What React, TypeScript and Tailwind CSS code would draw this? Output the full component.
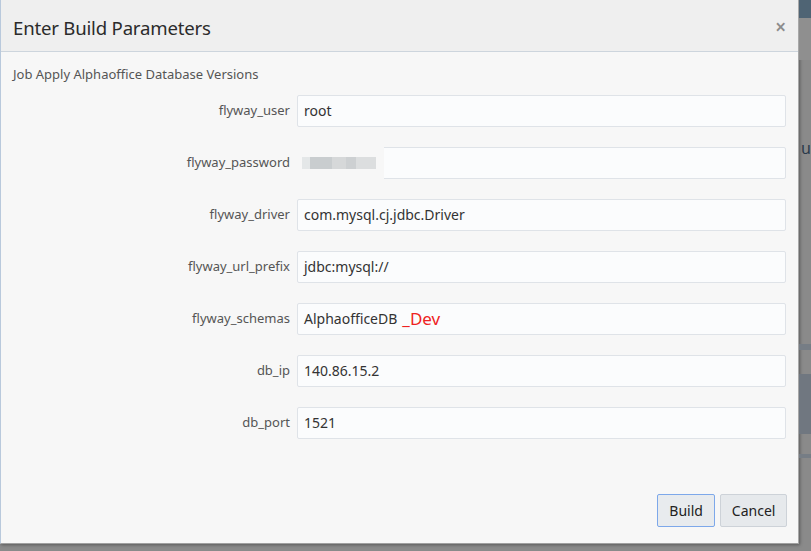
import React from "react";

const fields = [
  { label: "flyway_user", value: "root" },
  { label: "flyway_password", value: "", masked: true },
  { label: "flyway_driver", value: "com.mysql.cj.jdbc.Driver" },
  { label: "flyway_url_prefix", value: "jdbc:mysql://" },
  { label: "flyway_schemas", value: "AlphaofficeDB", suffix: "_Dev" },
  { label: "db_ip", value: "140.86.15.2" },
  { label: "db_port", value: "1521" },
];

export default function App() {
  return (
    <div
      className="w-[811px] h-[551px] flex bg-[#8a8a8a] overflow-hidden"
      style={{ fontFamily: "'Noto Sans', 'Open Sans', sans-serif" }}
    >
      <div className="w-[800px] h-[544px] flex flex-col bg-[#f7f7f7] border-l border-[#b9c9dc] border-r border-b border-r-[#a8a8a8] border-b-[#a0a0a0] shadow-[1px_1px_3px_rgba(0,0,0,0.35)]">
        {/* Header */}
        <div className="h-[52px] shrink-0 flex items-center justify-between pl-[12px] pr-[12px] pt-[4px] bg-[#efefef] border-b border-[#cdd5dd]">
          <h1 className="text-[18.6px] text-[#2b2b2b] tracking-[-0.2px]">Enter Build Parameters</h1>
          <span className="text-[19px] leading-none text-[#8c8c8c] font-semibold">×</span>
        </div>

        {/* Body */}
        <div className="flex-1 flex flex-col pl-[12px] pr-[11px]">
          <p className="mt-[13px] text-[13px] text-[#555]">Job Apply Alphaoffice Database Versions</p>
          <div className="mt-[10px] flex flex-col gap-[20px]">
            {fields.map((f) => (
              <div key={f.label} className="flex items-center h-[32px]">
                <label className="w-[284px] text-right pr-[7px] text-[13px] text-[#555]">{f.label}</label>
                <div className="relative w-[489px] h-[32px] flex items-center px-[6px] bg-[#fbfcfd] border border-[#dfe3e8] rounded-[2px] text-[14px] text-[#333]">
                  {f.value}
                  {f.suffix && <span className="ml-[5px] text-[17px] text-[#ee2222]">{f.suffix}</span>}
                  {f.masked && (
                    <div className="absolute left-[-8px] top-[-3px] w-[94px] h-[36px] bg-[#f7f7f7] flex items-center pl-[12px]">
                      <div className="w-[8px] h-[12px] bg-[#e4e7e8]" />
                      <div className="w-[22px] h-[12px] bg-[#c9cdcf]" />
                      <div className="w-[14px] h-[12px] bg-[#d6d8d9]" />
                      <div className="w-[10px] h-[12px] bg-[#cdd0d2]" />
                      <div className="w-[20px] h-[12px] bg-[#dcdedf]" />
                    </div>
                  )}
                </div>
              </div>
            ))}
          </div>
          <div className="flex-1" />
          <div className="flex justify-end gap-[5px] pb-[16px]">
            <button className="w-[58px] h-[33px] text-[14px] text-[#222] bg-[#e8ebee] border border-[#7da8ea] rounded-[2px]">
              Build
            </button>
            <button className="w-[67px] h-[33px] text-[14px] text-[#222] bg-[#e6e9ec] border border-[#cdd2d8] rounded-[2px]">
              Cancel
            </button>
          </div>
        </div>
      </div>

      {/* Background page peek */}
      <div className="flex-1 flex flex-col">
        <div className="h-[18px] bg-[#4f6474]" />
        <div className="h-[42px] bg-[#8f8f8f]" />
        <div className="h-[24px] mt-[80px] ml-[2px] text-[16px] text-[#2a3a4a] leading-none">u</div>
        <div className="h-[6px] mt-[180px] bg-[#767d85]" />
        <div className="h-[60px] mt-[24px] bg-[#707780]" />
        <div className="h-[4px] mt-[20px] bg-[#767d85]" />
      </div>
    </div>
  );
}
